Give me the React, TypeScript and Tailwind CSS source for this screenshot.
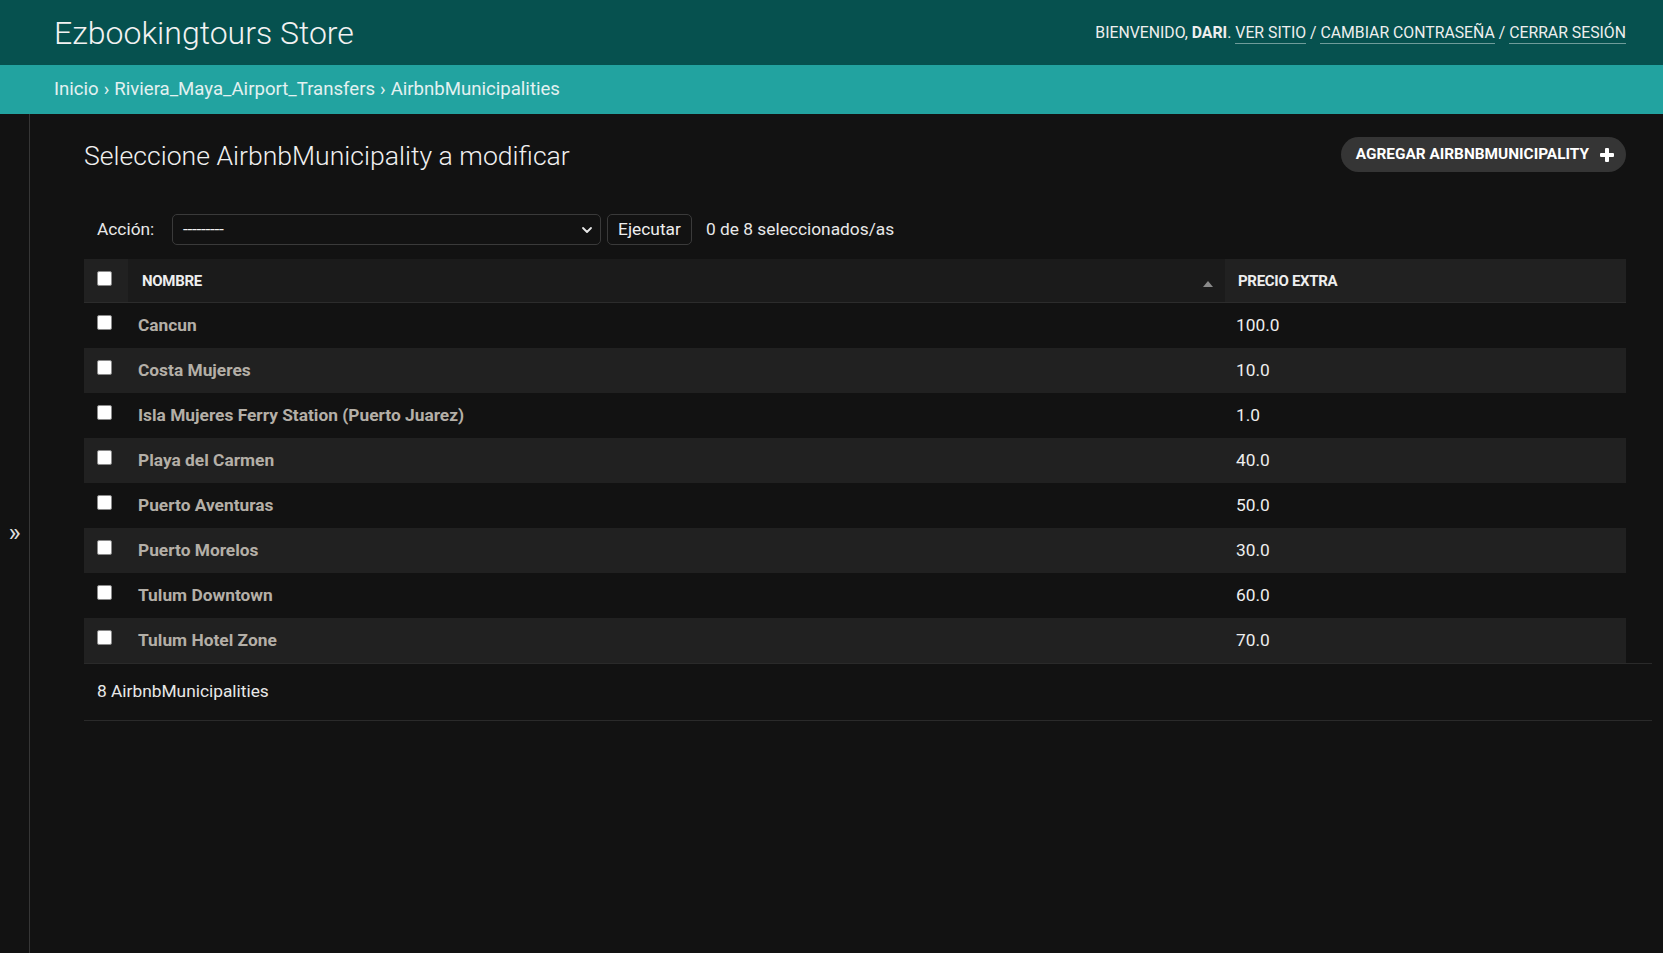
import React from "react";

const rows: { name: string; price: string }[] = [
  { name: "Cancun", price: "100.0" },
  { name: "Costa Mujeres", price: "10.0" },
  { name: "Isla Mujeres Ferry Station (Puerto Juarez)", price: "1.0" },
  { name: "Playa del Carmen", price: "40.0" },
  { name: "Puerto Aventuras", price: "50.0" },
  { name: "Puerto Morelos", price: "30.0" },
  { name: "Tulum Downtown", price: "60.0" },
  { name: "Tulum Hotel Zone", price: "70.0" },
];

function Check() {
  return (
    <div className="w-[15px] h-[15px] bg-white rounded-[2px] border border-[#8a8a8a]" />
  );
}

export default function App() {
  return (
    <div className="min-h-screen w-full bg-[#121212] font-['Roboto',sans-serif] flex flex-col text-[#eeeeee]">
      {/* Header */}
      <div className="h-[65px] bg-[#06514f] flex items-center justify-between pl-[54px] pr-[37px]">
        <div className="text-[32px] font-light text-[#f2f2f2] leading-none">Ezbookingtours Store</div>
        <div className="text-[15.8px] uppercase text-[#eeeeee] flex items-center pt-[1px]">
          <span>Bienvenido,&nbsp;</span>
          <span className="font-bold">Dari</span>
          <span>.&nbsp;</span>
          <span className="border-b border-[#6f9c9a] leading-[20px]">Ver sitio</span>
          <span>&nbsp;/&nbsp;</span>
          <span className="border-b border-[#6f9c9a] leading-[20px]">Cambiar contraseña</span>
          <span>&nbsp;/&nbsp;</span>
          <span className="border-b border-[#6f9c9a] leading-[20px]">Cerrar sesión</span>
        </div>
      </div>
      {/* Breadcrumbs */}
      <div className="h-[49px] bg-[#22a3a0] flex items-center pl-[54px] pt-[1px] text-[18.6px] text-[#e3f1f0]">
        <span>Inicio</span>
        <span className="mx-[5px]">›</span>
        <span>Riviera_Maya_Airport_Transfers</span>
        <span className="mx-[5px]">›</span>
        <span>AirbnbMunicipalities</span>
      </div>
      {/* Main */}
      <div className="flex flex-1">
        <div className="w-[30px] border-r border-[#363636] flex items-center justify-center">
          <span className="text-[26px] text-[#dddddd] leading-none pb-[3px]">»</span>
        </div>
        <div className="flex-1 pl-[54px] pr-[37px] pt-[23px]">
          {/* Title row */}
          <div className="flex items-center justify-between h-[35px]">
            <h1 className="text-[26.6px] font-light text-[#f0f0f0] leading-none pt-[3px]">
              Seleccione AirbnbMunicipality a modificar
            </h1>
            <div className="h-[35px] bg-[#353535] rounded-full flex items-center pl-[15px] pr-[12px] gap-[11px] text-[15.4px] font-bold uppercase text-white">
              <span>Agregar AirbnbMunicipality</span>
              <svg width="14" height="14" viewBox="0 0 14 14">
                <rect x="5" y="0" width="4" height="14" rx="1" fill="#ffffff" />
                <rect x="0" y="5" width="14" height="4" rx="1" fill="#ffffff" />
              </svg>
            </div>
          </div>
          {/* Actions */}
          <div className="mt-[42px] h-[31px] flex items-center pl-[13px] text-[17.33px]">
            <span className="w-[75px] text-[#e8e8e8]">Acción:</span>
            <div className="w-[429px] h-[31px] border border-[#3a3a3a] rounded-[5px] flex items-center justify-between pl-[10px] pr-[6px]">
              <span className="text-[17.33px] text-[#eeeeee] tracking-[-0.3px]">---------</span>
              <svg width="14" height="14" viewBox="0 0 14 14" fill="none">
                <path d="M3 5 L7 9 L11 5" stroke="#e8e8e8" strokeWidth="1.8" strokeLinecap="round" strokeLinejoin="round" />
              </svg>
            </div>
            <div className="ml-[6px] w-[85px] h-[31px] border border-[#3a3a3a] rounded-[5px] flex items-center justify-center text-[#eeeeee]">
              Ejecutar
            </div>
            <span className="ml-[14px] text-[#e8e8e8]">0 de 8 seleccionados/as</span>
          </div>
          {/* Table */}
          <div className="mt-[14px] grid grid-cols-[44px_1097px_1fr]">
            <div className="h-[44px] bg-[#212121] border-b border-[#2c2c2c] flex items-center pl-[13px] pb-[4px]">
              <Check />
            </div>
            <div className="h-[44px] bg-[#1b1b1b] border-b border-[#2c2c2c] flex items-center justify-between pl-[14px] pr-[12px]">
              <span className="text-[15px] font-bold text-[#eeeeee] tracking-[-0.3px] pt-[2px]">NOMBRE</span>
              <svg width="10" height="6" viewBox="0 0 10 6" className="mt-[6px]">
                <path d="M0 6 L5 0 L10 6 Z" fill="#8a8a8a" />
              </svg>
            </div>
            <div className="h-[44px] bg-[#212121] border-b border-[#2c2c2c] flex items-center pl-[13px]">
              <span className="text-[15px] font-bold text-[#eeeeee] tracking-[-0.3px] pt-[2px]">PRECIO EXTRA</span>
            </div>
            {rows.map((r, i) => {
              const bg = i % 2 === 1 ? "bg-[#212121]" : "bg-[#121212]";
              return (
                <React.Fragment key={r.name}>
                  <div className={`h-[45px] ${bg} flex items-center pl-[13px] pb-[6px]`}>
                    <Check />
                  </div>
                  <div className={`h-[45px] ${bg} flex items-center pl-[10px] text-[17.33px] font-bold text-[#b4afa7]`}>
                    {r.name}
                  </div>
                  <div className={`h-[45px] ${bg} flex items-center pl-[11px] text-[17.33px] text-[#eeeeee]`}>
                    {r.price}
                  </div>
                </React.Fragment>
              );
            })}
          </div>
          {/* Paginator */}
          <div className="mr-[-26px] h-[58px] border-t border-b border-[#2a2a2a] flex items-center pl-[13px] text-[17.33px] text-[#e8e8e8]">
            8 AirbnbMunicipalities
          </div>
        </div>
      </div>
    </div>
  );
}
